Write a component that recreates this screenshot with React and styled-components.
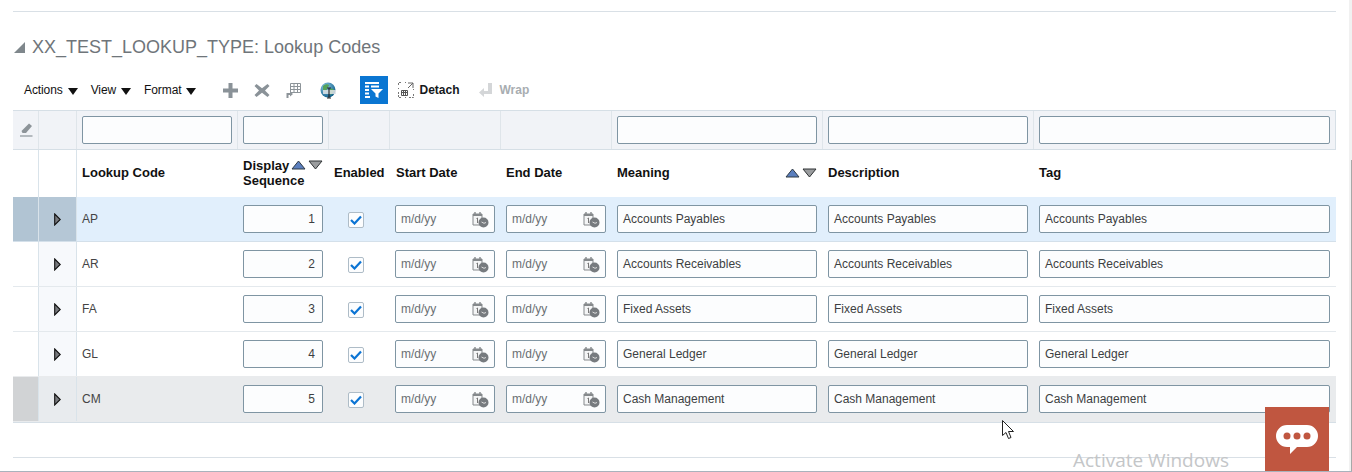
import React from "react";
import styled, { createGlobalStyle } from "styled-components";

const Global = createGlobalStyle`
  html, body { margin: 0; padding: 0; background: #fff; }
  body { font-family: "Liberation Sans", Arial, sans-serif; font-size: 12px; color: #333; }
`;
const Page = styled.div`
  position: relative; width: 1352px; height: 472px; overflow: hidden; background: #fff;
  box-sizing: border-box; padding: 11px 16px 0 13px; border-bottom: 1px solid #a9b2bc;
`;
const Rule = styled.div`height: 1px; background: #d9e0e6;`;
const Heading = styled.div`
  display: flex; align-items: center; gap: 7px; height: 20px; margin-top: 25px; padding-left: 1px;
`;
const Title = styled.h2`
  margin: 0; font-size: 18px; font-weight: 400; color: #6f757a; line-height: 20px;
`;
const Toolbar = styled.div`
  display: flex; align-items: center; height: 28px; margin-top: 19px; padding-left: 11px;
`;
const Menu = styled.div`
  display: flex; align-items: center; gap: 5px; margin-right: ${p => p.$gap}px; color: #111; font-size: 12px; letter-spacing: -0.1px;
`;
const Down = styled.span`
  width: 0; height: 0; border-left: 5px solid transparent; border-right: 5px solid transparent; border-top: 7px solid #111; margin-top: 2px;
`;
const IconSlot = styled.div`
  width: ${p => p.$w || 32}px; height: 28px; display: flex; align-items: center; justify-content: center; flex: none;
`;
const ActiveTool = styled(IconSlot)`
  background: #0a76d2; margin-left: 14px; margin-right: 9px;
`;
const ToolLabel = styled.span`
  font-weight: 700; font-size: 12px; color: ${p => p.$off ? "#a8adb1" : "#15191c"}; margin-left: ${p => p.$ml}px; margin-right: ${p => p.$mr || 0}px;
`;
const Table = styled.div`margin-top: 6px;`;
const Grid = styled.div`
  display: grid; grid-template-columns: 25px 38px 161px 91px 61px 111px 111px 211px 211px 303px;
`;
const FilterRow = styled(Grid)`
  background: #f1f3f7; border-top: 1px solid #d6dfe6; border-bottom: 1px solid #d6dfe6; height: 38px; box-sizing: content-box;
`;
const FilterCell = styled.div`
  display: flex; align-items: center; padding-left: ${p => p.$pl ?? 5}px; box-sizing: border-box;
  border-left: 1px solid ${p => p.$first ? "transparent" : "#dfe5ea"};
  border-right: ${p => p.$last ? "1px solid #d6dfe6" : "0"};
`;
const HeaderRow = styled(Grid)`height: 47px;`;
const HeaderCell = styled.div`
  position: relative; display: flex; align-items: center; padding: 0 0 2px ${p => p.$pl ?? 6}px; box-sizing: border-box;
  font-weight: 700; font-size: 13px; color: #111; line-height: 15px;
`;
const HandleHead = styled(HeaderCell)`
  border-left: 1px solid #d9e3ea; box-shadow: 1px 0 0 #d9e3ea; background: #fff;
`;
const SortPair = styled.span`
  display: inline-flex; gap: 2px; margin-left: auto; padding-right: ${p => p.$pr}px;
`;
const DisplayHead = styled.div`display: flex; flex-direction: column;`;
const DisplayLine = styled.div`display: flex; align-items: center; gap: 2px;`;
const tones = {
  selected: { bg: "#e1effc", side: "#b1c4d3", handle: "#b5c7d6", line: "#d4e0ea", shadow: "none" },
  plain: { bg: "#fff", side: "#fff", handle: "#f7f9fc", line: "#e4e9ed", shadow: "none" },
  hover: { bg: "#e9ebed", side: "#d1d3d5", handle: "#e8ebee", line: "#e9ebed", shadow: "0 -1px 0 #e9ebed, 0 1px 0 #d6dfe6" },
};
const DataRow = styled(Grid)`
  height: 44px; background: ${p => tones[p.$tone].bg}; border-bottom: 1px solid ${p => tones[p.$tone].line}; box-sizing: content-box;
  box-shadow: ${p => tones[p.$tone].shadow};
`;
const Indicator = styled.div`background: ${p => tones[p.$tone].side};`;
const Handle = styled.div`
  display: flex; align-items: center; justify-content: center; background: ${p => tones[p.$tone].handle};
  border-left: 1px solid #d9e3ea; box-shadow: 1px 0 0 #d9e3ea;
`;
const Cell = styled.div`
  display: flex; align-items: center; padding-left: ${p => p.$pl ?? 6}px; box-sizing: border-box; font-size: 12px; color: #444;
`;
const Field = styled.div`
  display: flex; align-items: center; justify-content: ${p => p.$num ? "flex-end" : "space-between"};
  box-sizing: border-box; height: 28px; width: ${p => p.$w}px; padding: 0 ${p => p.$num ? 7 : 5}px 0 5px; background: #fcfdfe;
  border: 1px solid #7f95a3; border-radius: 2px; font-size: 12px; color: ${p => p.$muted ? "#6a6f73" : "#3c3f42"};
`;
const Check = styled.div`
  display: flex; align-items: center; justify-content: center; width: 16px; height: 16px; margin-top: 2px; box-sizing: border-box;
  background: #fcfdfe; border: 1px solid #aebcc7; border-radius: 2px;
`;
const Chat = styled.div`
  position: absolute; left: 1265px; top: 407px; width: 64px; height: 64px; background: #c05640;
  display: flex; align-items: center; justify-content: center;
`;
const Watermark = styled.div`
  position: absolute; left: 1073px; top: 450px; font-family: "Open Sans", sans-serif; font-size: 19px; line-height: 21px; color: #c4c6c8; white-space: nowrap;
`;
const Pointer = styled.svg`position: absolute; left: 1002px; top: 420px;`;
const Scroll = styled.div`
  position: absolute; left: 1349px; top: 0; width: 3px; height: 472px; background: #f1f1f1;
`;
const ScrollThumb = styled.div`
  position: absolute; left: 2px; top: 160px; width: 1px; height: 312px; background: #a8a8a8;
`;
const Bottom = styled(Rule)`margin-top: 35px;`;

const Sort = ({ up }) => (
  <svg width="15" height="10" viewBox="0 0 15 10">
    {up
      ? <path d="M7.5 1 14 9H1z" fill="#5b7fbe" stroke="#2f3a44" strokeWidth="1" />
      : <path d="M1 1h13L7.5 9z" fill="#9a9c9e" stroke="#2f3335" strokeWidth="1" />}
  </svg>
);
const Expand = () => (
  <svg width="7" height="13" viewBox="0 0 7 13"><path d="M.7 1 6.300 6.500.7 12z" fill="#77797d" stroke="#111" strokeWidth="1.100" /></svg>
);
const CalIcon = () => (
  <svg width="17" height="17" viewBox="0 0 17 17">
    <path d="M1 3h9v11H1z" fill="#f4f5f6" stroke="#85898c" />
    <path d="M1 3h9v2H1z" fill="#85898c" />
    <path d="M3 1v3M8 1v3" stroke="#85898c" strokeWidth="1.4" />
    <path d="M4.500 7.500 5.500 7v5" fill="none" stroke="#777" />
    <circle cx="11.500" cy="11.500" r="5" fill="#777b7f" />
    <path d="M9.500 11 12 12.300 14 11.500" fill="none" stroke="#ddd" />
  </svg>
);
const Tick = () => (
  <svg width="12" height="10" viewBox="0 0 12 10"><path d="M1 5l3.500 3.500L11 1.500" fill="none" stroke="#0b74d4" strokeWidth="2.2" /></svg>
);
const Plus = () => (
  <svg width="15" height="15" viewBox="0 0 15 15"><path d="M5.500 0h4v5.500H15v4H9.500V15h-4V9.500H0v-4h5.500z" fill="#8a9298" /></svg>
);
const Cross = () => (
  <svg width="16" height="15" viewBox="0 0 16 15"><path d="M2.500 1 8 5.200 13.500 1 15.500 3 11 7.500 15.500 12 13.500 14 8 9.800 2.500 14 .5 12 5 7.500.5 3z" fill="#8a9298" /></svg>
);
const Freeze = () => (
  <svg width="16" height="17" viewBox="0 0 16 17" fill="none" stroke="#8d9499">
    <path d="M4.500 1.500h10v9h-10zM4.500 4.500h10M4.500 7.500h10M8 1.500v9M11.500 1.500v9" />
    <path d="M1.500 16v-4h4" strokeWidth="2" /><path d="M4 9.500 7 12 4 14.500z" fill="#8d9499" stroke="none" />
  </svg>
);
const Globe = () => (
  <svg width="17" height="17" viewBox="0 0 17 17">
    <defs><radialGradient id="g" cx="35%" cy="30%" r="75%"><stop offset="0" stopColor="#8ccbe8" /><stop offset="1" stopColor="#0f5c88" /></radialGradient></defs>
    <circle cx="8" cy="8" r="7.500" fill="url(#g)" />
    <path d="M3 4c2-2 5-2 6-1 0 2-2 2-2 4S4 9 3 8zM10 7c2-1 4 0 4 2l-3 4c-1-1-2-4-1-6z" fill="#54a35a" />
    <path d="M3 8h13v4H3z" fill="#dfe3e6" opacity=".85" />
    <path d="M7 6h4M7 16h4M9 6v10" stroke="#222" strokeWidth="1.1" />
  </svg>
);
const Filter = () => (
  <svg width="20" height="18" viewBox="0 0 20 18" fill="#fff">
    <path d="M1 1h14v2H1zM1 4.500h4v2H1zM7 4.500h8v2H7zM1 8h4v2H1zM1 11.500h4v2H1zM1 15h5v2H1z" />
    <path d="M7 8h12l-4.500 4.500V17l-3-1.500v-3z" />
  </svg>
);
const Detach = () => (
  <svg width="16" height="16" viewBox="0 0 16 16" fill="none" stroke="#777">
    <path d="M.5 3V.5H4M7 .5h1M.5 6v1M.5 10v5.500H4M7 15.500h1M11 15.500h4.500V12M15.500 8v-1" strokeDasharray="2 1" />
    <path d="M10 1h5v5M15 1l-5 5" stroke="#666" />
    <path d="M3.500 8.500h6v5h-6zM3.500 10.500h6M5.500 8.500v5M7.500 8.500v5" stroke="#555" />
  </svg>
);
const WrapIcon = () => (
  <svg width="13" height="14" viewBox="0 0 13 14"><path d="M9 0h4v11H5v3L0 9.500 5 5v3h4z" fill="#d4d6d8" /></svg>
);
const Eraser = () => (
  <svg width="13" height="14" viewBox="0 0 13 14">
    <path d="M1.500 8 9 .5l3 2.500-6 7H2.500z" fill="#8d9499" /><path d="M0 13h12.500" stroke="#8d9499" strokeWidth="1.200" />
  </svg>
);

const rows = [
  ["AP", 1, "Accounts Payables", "selected"],
  ["AR", 2, "Accounts Receivables", "plain"],
  ["FA", 3, "Fixed Assets", "plain"],
  ["GL", 4, "General Ledger", "plain"],
  ["CM", 5, "Cash Management", "hover"],
];

export default function App() {
  return (
    <Page>
      <Global />
      <Rule />
      <Heading>
        <svg width="11" height="11" viewBox="0 0 11 11"><path d="M11 0v11H0z" fill="#7f878c" /></svg>
        <Title>XX_TEST_LOOKUP_TYPE: Lookup Codes</Title>
      </Heading>
      <Toolbar>
        <Menu $gap={13}>Actions <Down /></Menu>
        <Menu $gap={13}>View <Down /></Menu>
        <Menu $gap={18}>Format <Down /></Menu>
        <IconSlot><Plus /></IconSlot>
        <IconSlot><Cross /></IconSlot>
        <IconSlot><Freeze /></IconSlot>
        <IconSlot $w={36}><Globe /></IconSlot>
        <ActiveTool $w={28}><Filter /></ActiveTool>
        <IconSlot $w={18}><Detach /></IconSlot>
        <ToolLabel $ml={4} $mr={20}>Detach</ToolLabel>
        <WrapIcon />
        <ToolLabel $off $ml={7}>Wrap</ToolLabel>
      </Toolbar>
      <Table>
        <FilterRow>
          <FilterCell $first $pl={6}><Eraser /></FilterCell>
          <FilterCell />
          <FilterCell><Field $w={150} /></FilterCell>
          <FilterCell><Field $w={80} /></FilterCell>
          <FilterCell />
          <FilterCell />
          <FilterCell />
          <FilterCell><Field $w={200} /></FilterCell>
          <FilterCell><Field $w={200} /></FilterCell>
          <FilterCell $last><Field $w={291} /></FilterCell>
        </FilterRow>
        <HeaderRow>
          <HeaderCell />
          <HandleHead />
          <HeaderCell>Lookup Code</HeaderCell>
          <HeaderCell>
            <DisplayHead>
              <DisplayLine>Display <SortPair $pr={0}><Sort up /><Sort /></SortPair></DisplayLine>
              <div>Sequence</div>
            </DisplayHead>
          </HeaderCell>
          <HeaderCell>Enabled</HeaderCell>
          <HeaderCell $pl={7}>Start Date</HeaderCell>
          <HeaderCell>End Date</HeaderCell>
          <HeaderCell>Meaning<SortPair $pr={5}><Sort up /><Sort /></SortPair></HeaderCell>
          <HeaderCell>Description</HeaderCell>
          <HeaderCell>Tag</HeaderCell>
        </HeaderRow>
        {rows.map(([code, seq, text, tone]) => (
          <DataRow key={code} $tone={tone}>
            <Indicator $tone={tone} />
            <Handle $tone={tone}><Expand /></Handle>
            <Cell>{code}</Cell>
            <Cell><Field $w={80} $num>{seq}</Field></Cell>
            <Cell $pl={20}><Check><Tick /></Check></Cell>
            <Cell><Field $w={100} $muted>m/d/yy<CalIcon /></Field></Cell>
            <Cell><Field $w={100} $muted>m/d/yy<CalIcon /></Field></Cell>
            <Cell><Field $w={200}>{text}</Field></Cell>
            <Cell><Field $w={200}>{text}</Field></Cell>
            <Cell><Field $w={291}>{text}</Field></Cell>
          </DataRow>
        ))}
      </Table>
      <Bottom />
      <Pointer width="14" height="20" viewBox="0 0 14 20">
        <path d="M.5.5v15l3.500-3 2.500 6 2.500-1-2.500-6h5z" fill="#fff" stroke="#222" />
      </Pointer>
      <Watermark>Activate Windows</Watermark>
      <Chat>
        <svg width="42" height="29" viewBox="0 0 42 29">
          <path d="M11 0h20a11 11 0 0 1 0 22H21l-7 7v-7h-3a11 11 0 0 1 0-22z" fill="#fff" />
          <circle cx="11" cy="11" r="3.500" fill="#c05640" /><circle cx="21" cy="11" r="3.500" fill="#c05640" /><circle cx="31" cy="11" r="3.500" fill="#c05640" />
        </svg>
      </Chat>
      <Scroll><ScrollThumb /></Scroll>
    </Page>
  );
}
